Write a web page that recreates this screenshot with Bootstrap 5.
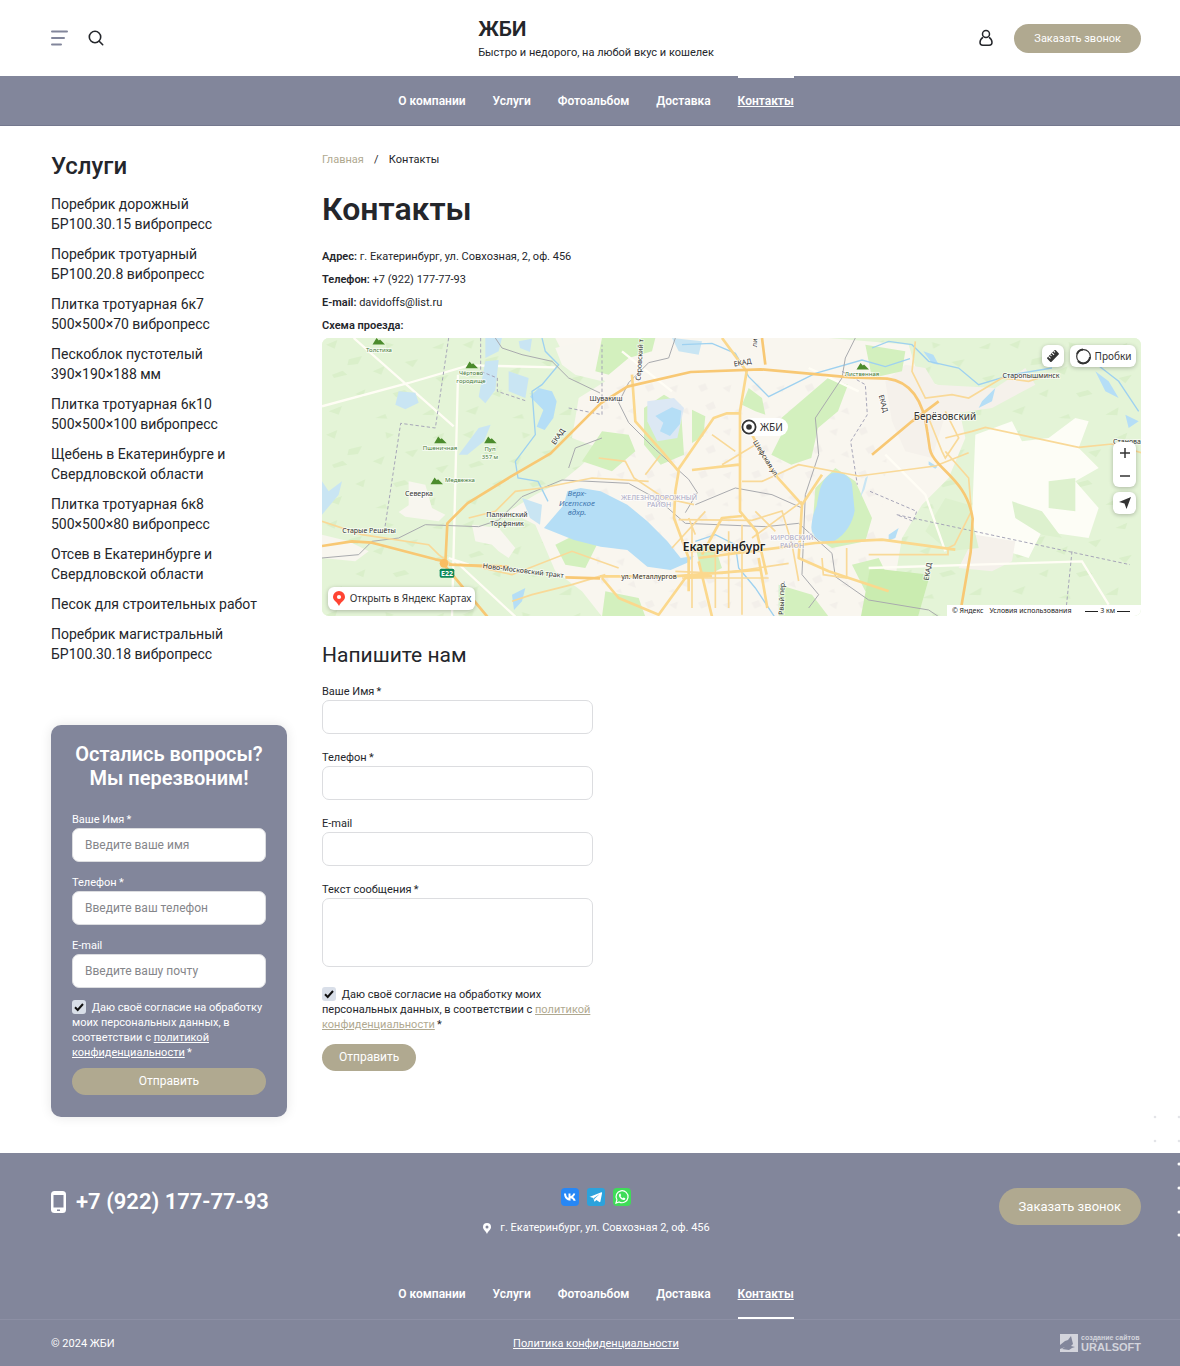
<!DOCTYPE html>
<html lang="ru">
<head>
<meta charset="utf-8">
<meta name="viewport" content="width=device-width, initial-scale=1">
<title>Контакты — ЖБИ</title>
<link href="https://cdn.jsdelivr.net/npm/bootstrap@5.3.0/dist/css/bootstrap.min.css" rel="stylesheet">
<style>
:root{--slate:#82869b;--sand:#b0a990;--ink:#24262b}
body{font-family:Roboto,"Noto Sans",sans-serif;font-size:11px;line-height:15px;color:var(--ink);background:#fff}
a{color:inherit}
.wrap{padding-left:51px;padding-right:39px}
.trio{display:grid;grid-template-columns:1fr auto 1fr;align-items:center}
.site-head{height:76px}
.brand-name{font-size:21px;line-height:24px;font-weight:600}
.icon-btn{border:0;background:none;padding:0;line-height:0;color:var(--ink)}
.pill{background:var(--sand);color:#fff;border:0;border-radius:20px;font-weight:400;font-size:11px;line-height:15px;padding:7px 20px}
.pill:hover{background:#9f987f;color:#fff}
.pill-wide{font-size:12px;padding:6px 17px}
.pill-lg{font-size:13px;line-height:17px;padding:10px 20px}
.bar{background:var(--slate);border-bottom:1px solid #74788e}
.menu{gap:27px;font-size:12px;font-weight:600;color:#fff}
.menu a{display:block;color:#fff;text-decoration:none;line-height:15px;padding:16px 0;border-top:2px solid transparent}
.menu a.current{text-decoration:underline;border-top-color:#fff}
.menu-foot a{border-top:0;border-bottom:2px solid transparent;padding:15px 0}
.menu-foot a.current{border-bottom-color:#fff}
.cols{display:grid;grid-template-columns:236px minmax(0,1fr);gap:35px;padding-top:26px;padding-bottom:36px}
.side-title{font-size:24px;line-height:28px;font-weight:500}
.side-list{font-size:14px;line-height:20px;font-weight:400;gap:10px;margin:14px 0 61px}
.side-list a{text-decoration:none}
.ask{background:var(--slate);color:#fff;border-radius:10px;padding:17px 21px 22px;box-shadow:0 0 12px rgba(0,0,0,.1)}
.ask-title{font-size:20px;line-height:24px;font-weight:600;margin-bottom:22px}
.fld{display:block;line-height:15px;margin-bottom:1px}
.box{display:block;width:100%;height:34px;border:1px solid #dcdde0;border-radius:7px;padding:0 12px;font-size:12px;background:#fff;color:var(--ink)}
.box::placeholder{color:#85868a;opacity:1}
textarea.box{height:69px;resize:none}
.tick{appearance:none;width:14px;height:14px;border-radius:3px;background:#d9dfe9;vertical-align:top;margin:0 3px 0 0;background-image:url("data:image/svg+xml,%3Csvg xmlns='http://www.w3.org/2000/svg' viewBox='0 0 14 14'%3E%3Cpath d='M3 7.3 5.7 10 11 4' fill='none' stroke='%23111' stroke-width='2'/%3E%3C/svg%3E")}
.crumbs{line-height:16px}
.crumbs a,.soft-link{color:var(--sand)}
.crumbs a{text-decoration:none}
.page-title{font-size:32px;line-height:40px;font-weight:600;margin:21px 0 20px}
.facts p{line-height:15px;margin:0 0 8px}
.facts b{font-weight:600}
.facts p:last-child{margin-bottom:5px}
.map-box{position:relative;height:278px;border-radius:7px;overflow:hidden;background:#e2f3d4;font-family:"Noto Sans",sans-serif;color:#333}
.map-box>svg{width:100%;height:100%;display:block}
.map-ctl{position:absolute;background:#fff;border:0;border-radius:6px;box-shadow:0 1px 4px rgba(0,0,0,.25);color:#333;display:flex;align-items:center;justify-content:center;padding:0;text-decoration:none;font-size:10px}
.c-ruler{right:77px;top:7px;width:22px;height:22px}
.c-traffic{right:5px;top:7px;width:66px;height:22px;gap:3px}
.c-zoom{right:5px;top:104px;width:23px;height:45px;flex-direction:column}
.c-zoom button{border:0;background:none;padding:0;width:100%;flex:1;line-height:0}
.c-geo{right:5px;top:154px;width:23px;height:22px}
.c-open{left:6px;bottom:6px;width:147px;height:23px;gap:4px}
.c-place{left:419px;top:80px;height:18px;border-radius:9px;box-shadow:none;padding-right:5px;gap:3px}
.c-copy{right:0;bottom:0;height:11px;border-radius:0;box-shadow:none;font-size:7px;gap:6px;padding:0 11px 0 5px;color:#222}
.c-copy a{text-decoration:none}
.scale-line{display:inline-block;width:13px;height:1px;background:#222;vertical-align:middle}
.write-title{font-size:21px;line-height:28px;font-weight:400;margin:25px 0 15px}
.write{width:271px;max-width:100%}
.write .group{margin-bottom:16px}
.write .group:nth-of-type(4){margin-bottom:20px}
.ask .group{margin-bottom:13px}
.send{margin-top:12px}
.foot{position:relative;background:var(--slate);color:#fff}
.foot-top{padding-top:35px}
.tel{font-size:22px;line-height:28px;font-weight:600;text-decoration:none;gap:10px}
.social{margin-bottom:14px}
.foot-menu{margin-top:37px;border-bottom:1px solid #8c8fa4}
.foot-low{height:46px}
.dots{position:absolute;right:0;top:-40px}
.us-small{font-family:"Liberation Sans",sans-serif;font-size:7px;line-height:8px;font-weight:700}
.us-big{font-family:"Liberation Sans",sans-serif;font-size:11px;line-height:11px;font-weight:700}
.maker{color:#d3d4dc;text-decoration:none;gap:3px}
</style>
<script src="https://cdn.jsdelivr.net/npm/bootstrap@5.3.0/dist/js/bootstrap.bundle.min.js"></script>
</head>
<body>
<header class="site-head wrap trio">
  <div class="d-flex align-items-center">
    <button class="icon-btn me-3" type="button" aria-label="Меню"><svg width="21" height="16" fill="none" stroke="#82869b" stroke-width="2" stroke-linecap="round"><path d="M1 1.500h15M1 8h12M1 14.500h9"/></svg></button>
    <button class="icon-btn" type="button" aria-label="Поиск"><svg width="16" height="16" fill="none" stroke="currentColor" stroke-width="1.600" stroke-linecap="round"><circle cx="7" cy="7" r="5.700"/><path d="m11.200 11.200 3.500 3.500"/></svg></button>
  </div>
  <div>
    <div class="brand-name">ЖБИ</div>
    <div class="mt-1">Быстро и недорого, на любой вкус и кошелек</div>
  </div>
  <div class="d-flex align-items-center justify-content-end gap-3">
    <button class="icon-btn me-1" type="button" aria-label="Личный кабинет"><svg width="16" height="18" fill="none" stroke="currentColor" stroke-width="1.500"><circle cx="8" cy="5" r="3.500"/><path d="M5 8.300C3 9.500 2 11.500 2 13.300c0 2 .8 3 2.800 3h6.400c2 0 2.800-1 2.800-3 0-1.800-1-3.800-3-5"/></svg></button>
    <button class="btn pill" type="button">Заказать звонок</button>
  </div>
</header>
<nav class="bar" aria-label="Основное меню">
  <div class="wrap menu d-flex justify-content-center">
    <a href="#">О компании</a><a href="#">Услуги</a><a href="#">Фотоальбом</a><a href="#">Доставка</a><a href="#" class="current">Контакты</a>
  </div>
</nav>
<div class="wrap cols">
  <aside>
    <h2 class="side-title m-0">Услуги</h2>
    <ul class="side-list list-unstyled d-flex flex-column">
      <li><a href="#">Поребрик дорожный<br>БР100.30.15 вибропресс</a></li>
      <li><a href="#">Поребрик тротуарный<br>БР100.20.8 вибропресс</a></li>
      <li><a href="#">Плитка тротуарная 6к7<br>500×500×70 вибропресс</a></li>
      <li><a href="#">Пескоблок пустотелый<br>390×190×188 мм</a></li>
      <li><a href="#">Плитка тротуарная 6к10<br>500×500×100 вибропресс</a></li>
      <li><a href="#">Щебень в Екатеринбурге и<br>Свердловской области</a></li>
      <li><a href="#">Плитка тротуарная 6к8<br>500×500×80 вибропресс</a></li>
      <li><a href="#">Отсев в Екатеринбурге и<br>Свердловской области</a></li>
      <li><a href="#">Песок для строительных работ</a></li>
      <li><a href="#">Поребрик магистральный<br>БР100.30.18 вибропресс</a></li>
    </ul>
    <form class="ask">
      <h3 class="ask-title text-center">Остались вопросы?<br>Мы перезвоним!</h3>
      <div class="group"><label class="fld" for="qn">Ваше Имя&thinsp;*</label><input class="box" id="qn" placeholder="Введите ваше имя"></div>
      <div class="group"><label class="fld" for="qp">Телефон&thinsp;*</label><input class="box" id="qp" type="tel" placeholder="Введите ваш телефон"></div>
      <div class="group mb-0"><label class="fld" for="qe">E-mail</label><input class="box" id="qe" type="email" placeholder="Введите вашу почту"></div>
      <div class="mt-2 pt-1"><input class="tick" type="checkbox" id="qa" checked> <label class="d-inline" for="qa">Даю своё согласие на обработку моих персональных данных, в соответствии с <a href="#">политикой конфиденциальности</a>&thinsp;*</label></div>
      <button class="btn pill pill-wide w-100 mt-2" type="submit">Отправить</button>
    </form>
  </aside>
  <main>
    <nav class="crumbs" aria-label="Хлебные крошки"><a href="#">Главная</a><span class="mx-2">&thinsp;/&thinsp;</span><span>Контакты</span></nav>
    <h1 class="page-title">Контакты</h1>
    <div class="facts">
      <p><b>Адрес:</b> г. Екатеринбург, ул. Совхозная, 2, оф. 456</p>
      <p><b>Телефон:</b> +7 (922) 177-77-93</p>
      <p><b>E-mail:</b> davidoffs@list.ru</p>
      <p><b>Схема проезда:</b></p>
    </div>
    <div class="map-box">
      <svg viewBox="0 0 819 278" preserveAspectRatio="xMidYMid slice" role="img" aria-label="Карта Екатеринбурга">
        <defs>
          <pattern id="facets" width="410" height="270" patternUnits="userSpaceOnUse">
            <g fill="#cfe9be" opacity=".5"><path d="m12 20 34-14-8 26zM80 64l40-10-12 24-32 4zM190 12l26 8-22 12zM30 110l32-12 14 12-40 10zM152 100l36-16-10 26zM248 72l40-8-16 24zM100 168l30-14-6 24zM212 166l36-10 14 12-40 10zM330 30l36-16-6 20zM340 120l40-10-20 26zM20 220l40-16-10 26zM300 230l40-22-4 24zM160 240l30-12 6 14z"/></g>
          </pattern>
          <pattern id="blocks" width="160" height="130" patternUnits="userSpaceOnUse">
            <g fill="#eeebe6" opacity=".6"><path d="m8 14 22-8 8 18-20 8zM82 20l26-10-6 24zM30 72l24-12 8 20-22 8zM116 90l20-12 6 22zM80 110l16-8 4 14z"/></g>
          </pattern>
        </defs>
        <g transform="scale(.33333)">
          <rect width="2460" height="836" fill="#e4f4d7"/>
          <rect width="2460" height="836" fill="url(#facets)"/>
          <!-- urban areas -->
          <g id="urban">
            <path id="city" fill="#f9f6ef" d="M700 0H1520L1760 20 1790 120 1900 160 1930 300 1880 420 1800 500 1740 600 1700 836H840L780 760 700 700 640 560 560 520 640 470 720 430 780 380 830 330 750 300 770 180 850 130 730 60z"/>
            <path fill="url(#blocks)" d="M850 130H1500L1700 300 1650 836H860L800 560 840 330z"/>
            <path fill="#f8f6ef" d="M260 430l50 10 20 70 40 20-20 20-100-14-20-14 30-20zM450 560l80 10 50 60-20 30-30-20-20-20-50-10zM0 590l80 20 60 30-40 30-100-10zM700 30l120-30 20 130-80-20-40-30z"/>
            <path fill="#fdfdf6" d="M1960 290l110-40 30 60 80-10 80-60 40 10-30 80 60 60-70 40 70 80-30 90-140-20-40 80-160-50-10-70z"/>
            <path fill="#f5f1eb" d="M1690 130l60-50 60 10 30 50 180 10 90-60 30 50-130 70-140 20-40 130-80-20-40-90zM1960 590l120 20-10 60-60 30-100-10z"/>
          </g>
          <!-- forests and parks inside the city -->
          <g fill="#d3f0be">
            <path d="M966 210l60-40 50 30 10 150-70 30-50-60zM1110 215l40 20-6 60-34 20zM1260 200l20-50 40 30 10 50-30-10zM1378 240l140-120 60 20-30 80-60 50-20 90-60 20-60-30 30-60zM1480 450l60-60 60 40 50 110-20 70-100 20-60-40zM840 280l80 10 20 50-70 60-90-30zM840 0h160l-10 40-70 20-60 50-40-10zM1120 620l60 10 20 60-60 30zM1590 680l80-20 40 80-80 20zM700 620l60-30 70 20-40 80-60-10zM850 760l100 20 20 56h-130zM1370 740l100 30 50 66h-150zM1630 20l120 20-10 60-90 20z"/>
            <path fill="#caecb0" d="M1644 690l180 20-40 140h-170z"/>
            <path fill="#ddf1ce" d="M1870 480l70 20 30 130-90 10-70-60zM2070 490l90 30 60 80-60-10-80-50zM2180 430l80-10v100l-80-10z"/>
          </g>
          <g stroke="#fffdf5" stroke-width="7" fill="none">
            <path d="M95 0 395 265M0 205 260 135 440 82l260 6M408 110 390 836M390 660l190 176M900 40l150 120M1460 90l150 70M1640 690l640-20 80 130M440 680l-60-20M1690 350l120 120 60 170"/>
          </g>
          <!-- water -->
          <g fill="#b5def6">
            <path d="M666 570l60-70 10-40 40-10 60 10 80 40 60 50 60 60 40 50 40-6-20 20-50 22-70-10-60-50-80-10-80-20z"/>
            <path d="M1530 406c30-6 54 8 60 32l8 80c-6 36-26 70-60 90-34 12-70-4-70-40 4-40 10-50 16-64 8-40 10-80 46-98zM650 150l40 10 14 30-10 50-26 36-24-10 20-50-20-20-20-20zM1980 190l40-40-10 40-40 20zM1804 40l30 10 16 30-20-4zM1820 370l26 16-6 6-20-12zM1700 590l30-20-10 30-20 8zM2320 100l40 30 30 50-40-20zM2410 230l40 20-30 20zM570 770l40-20-10 40-24 26z"/>
            <path fill="#c9e5f3" d="M490 0h50l-10 40-40 20zM490 70l40-4-10 90-30 40-20-20zM410 350l60-80 36-10-20 50-50 40zM230 160l50 4 10 30-40 20-30-14zM560 100l60 20-10 60-50-20zM0 430l20 30 40-30-10 40-50 60zM590 10l40-8-6 40-30-12zM600 480l60 20-6 60-30-20z"/>
            <path fill="#dce8f4" d="M976 190l80-10 30 30-20 90-60 10-30-60z"/>
            <path d="M1000 234l50-26 28 10-4 40-30 36-30-14 10-26z"/>
            <path fill="#c9e5f3" d="M1050 0l90 10-10 40-60-10zM1630 420l8-6-10 40-14 26z"/>
          </g>
          <g fill="none" stroke="#9ed1f0" stroke-width="4">
            <path d="M660 0l10 40 40 40-50 60-30 20 10 130-60 80 8 50 60 10 30 60"/>
            <path d="M1080 20l90-4 70 30 40 70 60 60 140-70 140-40 70 20 74-24M1650 30l50-20 70 10 50 50 90 20 60 50 100-30 120-20M2300 60l90 70 60 90M1120 610l60-20 60 30 10 70 50 60 60 90"/>
          </g>
          <!-- railways and borders -->
          <g fill="none" stroke="#a9aaae" stroke-width="3">
            <path d="M520 0l20 30 60 20 90 20 50 50 94 45M0 660l110-10 40-40 80-10 80-40 160 6 60-20 70-70 120-50 200 10 90 50 80 70 240 10 100-10 100 90 10 70 100 70 180 30 90 60M1600 0l-30 60-10 60-80 120 10 110-40 120-10 240 50 60-30 40M1060 0l-20 60-60 14-60 60-30 60 30 60 80 80 100 90 26 40-36 60M1120 500l120-50 110 20 90 40M740 390l20-60 80-30"/>
            <path stroke-dasharray="10 7" stroke="#a6a5b8" d="M380 0l-40 270-104-14-50 330M476 0v100l50 20v40l90 30M740 210l100 20V20M1560 100l70 40 6 90-50 80 20 130M1644 460l140 60-10 30-50-20 700 150M2250 640l-20 196"/>
          </g>
          <g fill="none" stroke="#f9d998" stroke-width="5">
            <path d="M0 550l120 40 200 30 30 30 40 30 130 10M440 540l80-20 60-60 80-10 150-30 170 10M480 690l90 20 180-70 140 50M570 790l60-20 120-30 100-30"/>
            <path d="M1260 430h60l110-50 180 34 230-30 100-40M1170 290l70 50M1200 380l100-60M830 360l80 10 26 50 90 60 90 20M970 410l46-60M1070 545l220 2 90-28 30 100 20 110M1110 810V560M1080 720h260M1180 640v170M1220 580v230M1260 560v270M1090 640h230M1150 520l-100 110M1290 600l150-110M1120 590l-20-50M1300 520l60 60M1060 700l140 6 200-30M1500 660l4 50 70 10v-90"/>
            <path d="M1780 10l-10 90 40 80 80-10 50 10 100-60 80 10 60-20M1820 240l40 100 10 20 40-60-40-80M1870 340l70 80 8 100-50 100-20 10v20H1640M1870 300l80-20 40-12 140 30 140 30 100-10 100 30 90 20"/>
          </g>
          <g fill="none" stroke="#fbd88d" stroke-width="8" stroke-linejoin="round">
            <path d="M1200 0l74 100-20 120v170l0 130 50 60 30 130M1290 290l60 110 90 100-10 160 90 40 180 60M930 110l10 140 80 90 50 60-10 60-4 80 44 120v100M1065 400l110-160 40-14h40M1110 396l140-16M1440 500l60-90M840 720l50 60 120 50 80-110 80-6M1140 650l60-110 60-6M834 715l220 0 260-20M1130 670l40 166M1310 660l26 150M1130 660l350-45 200-10 220 30"/>
            <path stroke="#f8c874" d="M0 624l90-14 60 4 190 50 30 6M370 676l6-120 60-60 130-80 120-70 150-150 80-50 190-44 210-8 270 24 110 4c80 10 110 80 120 160l6 40c4 70 110 90 130 220l-6 100-36 210M1650 350l120-100 80-60M366 680l130 156M1320 0l10 80M380 680l180 6M730 718l104 3"/>
          </g>
          <circle cx="366" cy="676" r="13" fill="#f8bd62"/>
          <g fill="#4c8c2d"><path d="m156 17 8-13 6 7 4-3 9 9zM435 88l8-13 6 7 4-3 9 9zM341 313l8-13 6 7 4-3 9 9zM491 313l8-13 6 7 4-3 9 9zM330 436l8-13 6 7 4-3 9 9zM1608 92l8-13 6 7 4-3 9 9z" stroke="#4c8c2d" stroke-width="5"/></g>
          <rect x="353" y="692" width="44" height="27" rx="5" fill="#0e8958"/>
        </g>
        <g font-family="Noto Sans, sans-serif" text-anchor="middle" fill="#333" stroke="#fff" stroke-width="2" stroke-opacity=".6" paint-order="stroke" stroke-linejoin="round" font-size="7">
          <g fill="#4a7a3c" font-size="6">
            <text x="57" y="14">Толстиха</text><text x="149" y="37">Чёртово</text><text x="149" y="45">городище</text><text x="118" y="112">Пшеничная</text><text x="168" y="113">Пуп</text><text x="168" y="121">357 м</text><text x="138" y="144">Медвежка</text><text x="540" y="38">Лиственная</text>
          </g>
          <text x="97" y="158">Северка</text><text x="47" y="195">Старые Решёты</text><text x="185" y="179">Палкинский</text><text x="185" y="188">Торфяник</text><text x="284" y="63">Шувакиш</text>
          <text x="709" y="40">Старопышминск</text><text x="623" y="82" font-size="10">Берёзовский</text><text x="805" y="106">Станова</text>
          <text x="402" y="213" font-size="12" font-weight="600" fill="#222">Екатеринбург</text>
          <g fill="#4177b0" font-style="italic" font-size="8" stroke="none"><text x="255" y="158">Верх-</text><text x="255" y="168">Исетское</text><text x="255" y="177">вдхр.</text></g>
          <g fill="#a9a7c4" font-size="7"><text x="337" y="162">ЖЕЛЕЗНОДОРОЖНЫЙ</text><text x="337" y="169">РАЙОН</text><text x="470" y="202">КИРОВСКИЙ</text><text x="470" y="210">РАЙОН</text></g>
          <text transform="translate(238 100) rotate(-55)">ЕКАД</text><text transform="translate(421 27) rotate(-10)">ЕКАД</text><text transform="translate(559 66) rotate(75)">ЕКАД</text><text transform="translate(608 234) rotate(-80)">ЕКАД</text>
          <text transform="translate(320 22) rotate(-86)">Серовский т</text><text transform="translate(442 122) rotate(58)">Шефская ул.</text><text transform="translate(462 260) rotate(-88)">Рвый пер.</text>
          <text transform="translate(201 235) rotate(7)">Ново-Московский тракт</text><text transform="translate(327 241)">ул. Металлургов</text><text transform="translate(435 5) rotate(-85)">ли</text>
          <text x="125" y="238" fill="#fff" stroke="none" font-weight="700">E22</text>
        </g>
      </svg>
      <div class="map-ctl c-place"><svg width="16" height="18"><circle cx="8" cy="9" r="6.600" fill="#fff" stroke="#333" stroke-width="1.800"/><circle cx="8" cy="9" r="2.800" fill="#333"/></svg><span>ЖБИ</span></div>
      <button class="map-ctl c-ruler" type="button" aria-label="Линейка"><svg width="14" height="14"><g transform="rotate(-45 7 7)"><rect x="1" y="4" width="12" height="6" rx="1" fill="#333"/><path d="M3.500 4v3M6 4v2M8.500 4v3M11 4v2" stroke="#fff"/></g></svg></button>
      <button class="map-ctl c-traffic" type="button"><svg width="17" height="17" fill="none" stroke="#333"><circle cx="8.500" cy="8.500" r="6.800" stroke-width="1.200"/><path d="M2 6A7 7 0 0 1 8 1.500M15 9a7 7 0 0 1-7 6.400A7 7 0 0 1 3 13" stroke-width="2"/></svg>Пробки</button>
      <div class="map-ctl c-zoom"><button type="button" aria-label="Приблизить"><svg width="12" height="12" stroke="#333" stroke-width="1.500"><path d="M1 6h10M6 1v10"/></svg></button><button type="button" aria-label="Отдалить"><svg width="12" height="12" stroke="#333" stroke-width="1.500"><path d="M1 6h10"/></svg></button></div>
      <button class="map-ctl c-geo" type="button" aria-label="Моё местоположение"><svg width="14" height="14"><path fill="#333" d="M13 1 8.500 13 6.500 7.500 1 6z"/></svg></button>
      <a class="map-ctl c-open" href="#"><svg width="14" height="17"><path fill="#f43" d="M7 1a6 6 0 0 1 6 6c0 3.500-4 4.500-6 9-2-4.500-6-5.500-6-9a6 6 0 0 1 6-6z"/><circle cx="7" cy="7" r="2.100" fill="#fff"/></svg><span>Открыть в Яндекс Картах</span></a>
      <div class="map-ctl c-copy"><span>© Яндекс</span><a href="#">Условия использования</a><span class="ms-2"><i class="scale-line"></i> 3 км <i class="scale-line"></i></span></div>
    </div>
    <h2 class="write-title">Напишите нам</h2>
    <form class="write">
      <div class="group"><label class="fld" for="wn">Ваше Имя&thinsp;*</label><input class="box" id="wn"></div>
      <div class="group"><label class="fld" for="wp">Телефон&thinsp;*</label><input class="box" id="wp" type="tel"></div>
      <div class="group"><label class="fld" for="we">E-mail</label><input class="box" id="we" type="email"></div>
      <div class="group"><label class="fld" for="wt">Текст сообщения&thinsp;*</label><textarea class="box" id="wt"></textarea></div>
      <div><input class="tick" type="checkbox" id="wa" checked> <label class="d-inline" for="wa">Даю своё согласие на обработку моих персональных данных, в соответствии с <a class="soft-link" href="#">политикой конфиденциальности</a>&thinsp;*</label></div>
      <button class="btn pill pill-wide send" type="submit">Отправить</button>
    </form>
  </main>
</div>
<footer class="foot">
  <svg class="dots" width="28" height="126" aria-hidden="true"><g fill="#e3e4e8"><circle cx="3" cy="4" r="1.300"/><circle cx="27" cy="4" r="1.300"/><circle cx="3" cy="28" r="1.300"/><circle cx="27" cy="28" r="1.300"/></g><g fill="#fff"><circle cx="27" cy="51" r="1.500"/><circle cx="27" cy="75" r="1.500"/><circle cx="27" cy="99" r="1.500"/><circle cx="27" cy="122" r="1.500"/></g></svg>
  <div class="wrap trio foot-top align-items-start">
    <a class="tel d-flex align-items-center" href="tel:+79221777793"><svg width="15" height="22"><rect width="15" height="22" rx="3.500" fill="#fff"/><path fill="#82869b" d="M2.500 4h10v12.500h-10zM6 18.500h3v1.500H6z"/></svg>+7 (922) 177-77-93</a>
    <div class="text-center">
      <div class="d-flex justify-content-center social">
        <a href="#" class="me-1 pe-1" aria-label="ВКонтакте"><svg class="d-block" width="18" height="18" viewBox="0 0 18 18"><rect width="18" height="18" rx="4" fill="#2787f5"/><path fill="#fff" d="M9.800 12.800C5.500 12.800 3.200 10 3 5.600h2c.1 2.800 1.400 4.200 2.500 4.500V5.600h2v2.600c1.200-.2 2.300-1.300 2.700-2.600h2c-.3 1.700-1.400 2.900-2.300 3.500.9.400 2.200 1.500 2.800 3.700h-2.200c-.5-1.300-1.600-2.300-3-2.500v2.500z"/></svg></a>
        <a href="#" class="me-1 pe-1" aria-label="Telegram"><svg class="d-block" width="18" height="18" viewBox="0 0 18 18"><rect width="18" height="18" rx="3" fill="#2ca2dc"/><path fill="#fff" d="m3 8.800 11.300-4.600c.5-.2.900.1.800.7l-1.700 8.700c-.1.600-.5.700-1 .5l-3-2.200-1.500 1.500c-.4.300-.6.100-.7-.4l-.8-2.900-3.300-1c-.6-.2-.6-.6-.1-.3zm4 1.300.6 2 .3-1.700 4.800-4.300z"/></svg></a>
        <a href="#" aria-label="WhatsApp"><svg class="d-block" width="18" height="18" viewBox="0 0 18 18"><rect width="18" height="18" rx="4" fill="#3fdc58"/><path fill="none" stroke="#fff" stroke-width="1.200" d="m3 15 .9-3.200A6 6 0 1 1 6.200 14z"/><path fill="#fff" d="M6.800 5.700c.4-.2.700 0 .8.300l.5 1.200c0 .4-.6.800-.5 1 .5 1 1.200 1.600 2.200 2 .4 0 .7-.8 1-.7l1.400.7c.3.300 0 1.200-.5 1.500-2.200 1.200-6-2-5.800-4.600 0-.6.400-1.200.9-1.400z"/></svg></a>
      </div>
      <div><svg class="me-1 pe-1" width="14" height="13" viewBox="0 0 10 13" aria-hidden="true"><path fill="#fff" fill-rule="evenodd" d="M5 1a4 4 0 0 1 4 4c0 2.500-2.500 3.500-4 7-1.500-3.500-4-4.500-4-7a4 4 0 0 1 4-4zm0 2.500a1.500 1.500 0 1 0 0 3 1.500 1.500 0 0 0 0-3z"/></svg>г. Екатеринбург, ул. Совхозная 2, оф. 456</div>
    </div>
    <div class="text-end"><button class="btn pill pill-lg" type="button">Заказать звонок</button></div>
  </div>
  <nav class="foot-menu" aria-label="Меню в подвале">
    <div class="wrap menu menu-foot d-flex justify-content-center">
      <a href="#">О компании</a><a href="#">Услуги</a><a href="#">Фотоальбом</a><a href="#">Доставка</a><a href="#" class="current">Контакты</a>
    </div>
  </nav>
  <div class="foot-low wrap trio">
    <span>© 2024 ЖБИ</span>
    <a href="#">Политика конфиденциальности</a>
    <a href="#" class="maker d-flex align-items-center justify-content-end"><svg width="18" height="18"><path fill="currentColor" d="M0 0h18v18H0z"/><path fill="#82869b" d="m0 11 5-4 3-1 3-4 1 4 1 4-2 2 4 1-3 1-3 2-7-1 3-2-5 2z"/></svg><span><span class="us-small d-block">создание сайтов</span><span class="us-big d-block">URALSOFT</span></span></a>
  </div>
</footer>
</body>
</html>
